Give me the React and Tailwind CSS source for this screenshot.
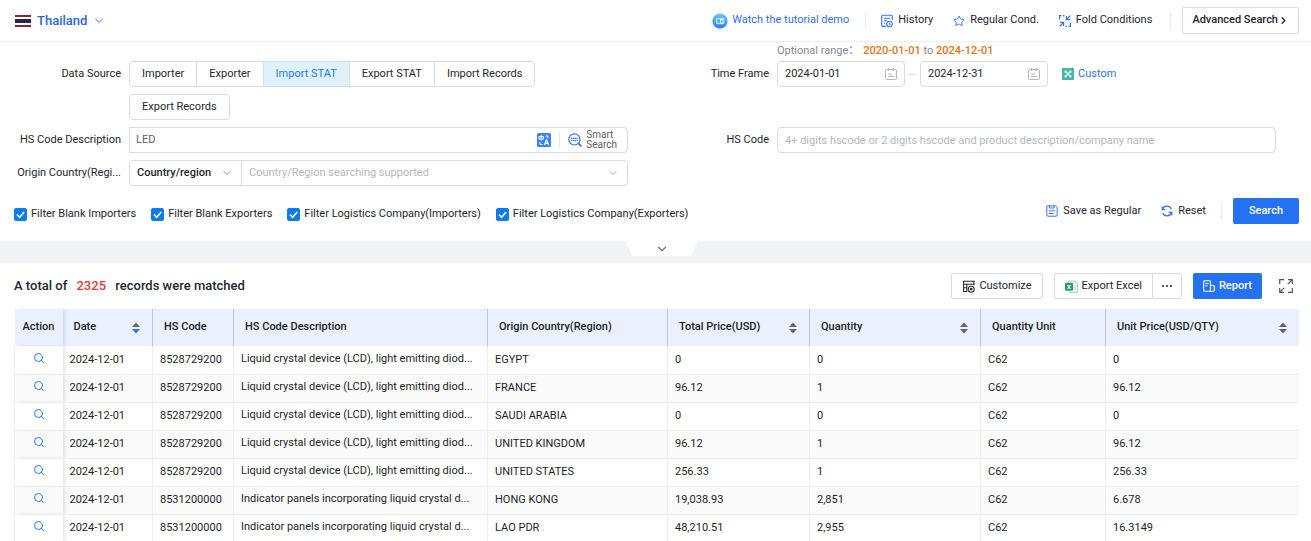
import React, { useState } from 'react';
import { ChevronDown, ChevronRight, Search, Star } from 'lucide-react';

const SOURCES = ['Importer', 'Exporter', 'Import STAT', 'Export STAT', 'Import Records', 'Export Records'];

const FILTERS = [
    'Filter Blank Importers',
    'Filter Blank Exporters',
    'Filter Logistics Company(Importers)',
    'Filter Logistics Company(Exporters)',
];

const COLUMNS = [
    { name: 'Action', width: 'w-12' },
    { name: 'Date', width: 'w-[90px]', sort: 'desc' },
    { name: 'HS Code', width: 'w-[81px]' },
    { name: 'HS Code Description', width: 'w-[254px]' },
    { name: 'Origin Country(Region)', width: 'w-[180px]' },
    { name: 'Total Price(USD)', width: 'w-[142px]', sort: 'none' },
    { name: 'Quantity', width: 'w-[171px]', sort: 'none' },
    { name: 'Quantity Unit', width: 'w-[125px]' },
    { name: 'Unit Price(USD/QTY)', width: 'w-auto', sort: 'none' },
];

const LCD = 'Liquid crystal device (LCD), light emitting diod...';
const PANEL = 'Indicator panels incorporating liquid crystal d...';

const ROWS = [
    ['2024-12-01', '8528729200', LCD, 'EGYPT', '0', '0', 'C62', '0'],
    ['2024-12-01', '8528729200', LCD, 'FRANCE', '96.12', '1', 'C62', '96.12'],
    ['2024-12-01', '8528729200', LCD, 'SAUDI ARABIA', '0', '0', 'C62', '0'],
    ['2024-12-01', '8528729200', LCD, 'UNITED KINGDOM', '96.12', '1', 'C62', '96.12'],
    ['2024-12-01', '8528729200', LCD, 'UNITED STATES', '256.33', '1', 'C62', '256.33'],
    ['2024-12-01', '8531200000', PANEL, 'HONG KONG', '19,038.93', '2,851', 'C62', '6.678'],
    ['2024-12-01', '8531200000', PANEL, 'LAO PDR', '48,210.51', '2,955', 'C62', '16.3149'],
];

const Flag = () => (
    <svg className="w-4 h-3" viewBox="0 0 16 12">
        <rect width="16" height="12" fill="#fff" />
        <rect width="16" height="2" fill="#8f2138" />
        <rect y="4" width="16" height="4" fill="#222a48" />
        <rect y="10" width="16" height="2" fill="#8f2138" />
    </svg>
);

const TutorialIcon = () => (
    <svg className="w-4 h-4" viewBox="0 0 16 16">
        <defs>
            <linearGradient id="tutorial" x1="0" y1="0" x2="0" y2="1">
                <stop offset="0" stopColor="#6cc8fa" />
                <stop offset="1" stopColor="#2b78f0" />
            </linearGradient>
        </defs>
        <circle cx="8" cy="8" r="7.6" fill="url(#tutorial)" />
        <rect x="4" y="5" width="8.4" height="6.2" rx="1.4" fill="#d9efff" />
        <rect x="5" y="6" width="3" height="4.2" rx="0.6" fill="#5fb0f7" />
        <path d="M9.5 7.6v2.200M11 6.400v3.400" stroke="#5fb0f7" />
    </svg>
);

const HistoryIcon = () => (
    <svg className="w-3 h-3.5" viewBox="0 0 12 14" fill="none" stroke="#2f74ee" strokeWidth="1.1">
        <path d="M5 12.4H1.9A1.2 1.2 0 0 1 .7 11.2V2.5A1.2 1.2 0 0 1 1.9 1.3h8.2a1.2 1.2 0 0 1 1.2 1.2V6" />
        <path d="M3 4.2h6M3 6.8h3M3 9.3h1" />
        <circle cx="8.5" cy="10" r="2.8" />
        <path d="M8.4 8.6v1.6h1.3" />
    </svg>
);

const FoldIcon = () => (
    <svg className="w-3 h-3" viewBox="0 0 12 12" fill="none" stroke="#2f74ee" strokeWidth="1.2">
        <path d="M.6 4.500V.6H2.400M4 .6h1.400M11.400 7.500v3.900H9.600M8 11.400H6.600" />
        <path d="M11.400.6 8 4M7.400 1v3.600H11" />
        <path d="M.6 11.400 4 8M4.600 11V7.400H1" />
    </svg>
);

const CalendarIcon = () => (
    <svg className="w-3 h-3 shrink-0" viewBox="0 0 12 12" fill="none" stroke="#b3b6bb">
        <rect x=".5" y="1.5" width="11" height="10" rx="1" />
        <path d="M3.5 0v3M8.5 0v3M3 6h4M3 8.500h6" />
    </svg>
);

const CustomIcon = () => (
    <svg className="w-3 h-3" viewBox="0 0 12 12">
        <rect width="12" height="12" fill="#45b8a4" />
        <path d="M3 3l6 6M9 3L3 9" stroke="#fff" strokeWidth="1.2" fill="none" />
        <path d="M2.500 2.500h2.500v2.500h-2.500zM7 2.500h2.500v2.500h-2.500zM2.500 7h2.500v2.500h-2.500zM7 7h2.500v2.500h-2.500z" fill="#cdeee8" opacity=".8" />
    </svg>
);

const TranslateIcon = () => (
    <svg className="w-3.5 h-3.5" viewBox="0 0 14 14" fill="none" stroke="#fff">
        <rect width="14" height="14" rx="1.5" fill="#3d82f0" stroke="none" />
        <path d="M2 3.500h4.500v2.500H2zM4.250 2v5.500M8.500 3h2.500v2M3 9v2.500h2.500" />
        <path d="M7.500 12l2-5.200 2.200 5.200M8.200 10.400h2.800" strokeWidth="1.2" />
    </svg>
);

const SmartIcon = () => (
    <svg className="w-3.5 h-3.5" viewBox="0 0 14 14" fill="none" stroke="#2f74ee" strokeWidth="1.2">
        <circle cx="6.4" cy="6.4" r="5.6" />
        <path d="M10.400 10.400l3 3" strokeWidth="1.5" />
        <path d="M2.800 5.300h7.200M2.800 7.500h7.200" strokeDasharray="1.6 .5" />
    </svg>
);

const SaveIcon = () => (
    <svg className="w-3 h-3" viewBox="0 0 12 12" fill="none" stroke="#2f74ee">
        <path d="M2 .8h7.500l1.700 1.700V10a1.200 1.200 0 0 1-1.200 1.200H2A1.200 1.200 0 0 1 .8 10V2A1.200 1.200 0 0 1 2 .8z" />
        <path d="M3.500.8v2.200h4.500V.8M3 5.800h6M3 8.500h4.500" />
    </svg>
);

const ResetIcon = () => (
    <svg className="w-3 h-3" viewBox="0 0 12 12" fill="none" stroke="#2f74ee" strokeWidth="1.2">
        <path d="M1.500 4.500A4.700 4.700 0 0 1 10.300 4M10.500 7.500A4.700 4.700 0 0 1 1.700 8" />
        <path d="M1.200 1.500v3.200h3M10.800 10.500V7.300h-3" />
    </svg>
);

const CustomizeIcon = () => (
    <svg className="w-[13px] h-[13px]" viewBox="0 0 13 13" fill="none" stroke="#2a2d33" strokeWidth="1.1">
        <path d="M5 11.500H1.600V1.200h10.300v4M.8 1.200h12M1.600 4.200h10.300M1.600 7.800h3.200M4.800 4.200v7.300" />
        <circle cx="9.2" cy="9.2" r="3" />
        <circle cx="9.2" cy="9.2" r=".8" />
    </svg>
);

const ExcelIcon = () => (
    <svg className="w-[13px] h-[13px]" viewBox="0 0 13 13" fill="none">
        <path d="M3.500 2.500V1h6.500l2.500 2.500v8.800h-9" stroke="#b9c4be" />
        <path d="M10 5v5" stroke="#b9c4be" />
        <rect y="2.8" width="8" height="8" rx=".8" fill="#1fa05c" />
        <path d="M2.500 4.800l3 4M5.500 4.800l-3 4" stroke="#fff" strokeWidth="1.1" />
    </svg>
);

const ReportIcon = () => (
    <svg className="w-3 h-3" viewBox="0 0 12 12" fill="none" stroke="#fff" strokeWidth="1.1">
        <path d="M10.200 11.300H1.700a1 1 0 0 1-1-1V1.700a1 1 0 0 1 1-1h4.800a1 1 0 0 1 1 1v9.600" />
        <path d="M7.500 5.500h2.800a1 1 0 0 1 1 1v3.800a1 1 0 0 1-1.100 1M2.500 3.500h3.200M2.500 5.600h2" />
    </svg>
);

const ExpandIcon = () => (
    <svg className="w-3.5 h-3.5" viewBox="0 0 14 14" fill="none" stroke="#53565c" strokeWidth="1.2">
        <path d="M.7 5V.7H5M13.300 9v4.300H9" />
        <path d="M9 .7h4.300V5M13.300.7 8.800 5.200M5 13.300H.7V9M.7 13.300l4.500-4.500" />
    </svg>
);

const SortIcon = ({ sort }) => (
    <svg className="w-2 h-3 shrink-0" viewBox="0 0 8 12">
        <path d="M4 0.5l4 4.500H0z" fill="#61656f" />
        <path d="M4 11.5L0 7h8z" fill={sort === 'desc' ? '#1b7cf2' : '#61656f'} />
    </svg>
);

const Field = ({ label, htmlFor, top, children }) => (
    <div className={`flex gap-2 pr-8.5 ${top ? 'items-start' : 'items-center'}`}>
        <label
            htmlFor={htmlFor}
            className={`w-[107px] shrink-0 whitespace-nowrap text-right leading-[26px] ${top ? 'pt-[17px]' : ''}`}
        >
            {label}
        </label>
        <div className="flex-1 min-w-0">{children}</div>
    </div>
);

const DateBox = ({ id, value, onChange, label }) => (
    <div className="flex items-center w-32 h-[26px] px-[7px] rounded border border-[#d9dbe0]">
        <input
            id={id}
            aria-label={label}
            className="flex-1 min-w-0 outline-none"
            value={value}
            onChange={e => onChange(e.target.value)}
        />
        <CalendarIcon />
    </div>
);

const Divider = () => <span className="w-px h-4 bg-[#e8e9ec]" />;

const App = () => {
    const [source, setSource] = useState('Import STAT');
    const [from, setFrom] = useState('2024-01-01');
    const [to, setTo] = useState('2024-12-31');
    const [description, setDescription] = useState('LED');

    return (
        <div className="bg-white text-[11px] text-[#24272e] font-['Roboto','Noto_Sans_CJK_SC',sans-serif]">
            {/* Header */}
            <header className="flex items-center h-[42px] pl-[15px] pr-3 border-b border-[#eceef1]">
                <button className="flex items-center gap-1.5 text-[13px] font-medium text-[#2765dd]">
                    <Flag />
                    Thailand
                    <ChevronDown size={12} />
                </button>
                <nav className="flex items-center ml-auto">
                    <a href="#tutorial" className="flex items-center gap-1 mr-4 text-[#2f6fe8]">
                        <TutorialIcon />
                        Watch the tutorial demo
                    </a>
                    <Divider />
                    <button className="flex items-center gap-[5px] ml-[15px] mr-5">
                        <HistoryIcon />
                        History
                    </button>
                    <button className="flex items-center gap-[5px] mr-5">
                        <Star size={12} color="#2f74ee" />
                        Regular Cond.
                    </button>
                    <button className="flex items-center gap-[5px] mr-[18px]">
                        <FoldIcon />
                        Fold Conditions
                    </button>
                    <Divider />
                    <button className="flex items-center ml-[11px] h-[27px] px-[9px] rounded-xs border border-[#d9dbe0] font-medium">
                        Advanced Search
                        <ChevronRight size={11} strokeWidth={3} />
                    </button>
                </nav>
            </header>

            {/* Search form */}
            <form className="pl-3.5 pt-0.5 pb-[17px]" onSubmit={e => e.preventDefault()}>
                <div className="grid grid-cols-2 gap-y-[7px] pr-px">
                    <Field label="Data Source" top>
                        <div className="flex flex-wrap gap-y-[7px] pt-[17px]">
                            {SOURCES.map((item, index) => (
                                <button
                                    key={item}
                                    type="button"
                                    onClick={() => setSource(item)}
                                    className={`h-[26px] px-3 -mr-px border first:rounded-l last:rounded ${
                                        index === 4 ? 'rounded-r' : ''
                                    } ${
                                        item === source
                                            ? 'bg-[#dff2fb] border-[#c5e4f3] text-[#1b7cf2]'
                                            : 'border-[#d9dbe0]'
                                    }`}
                                >
                                    {item}
                                </button>
                            ))}
                        </div>
                    </Field>
                    <Field label="Time Frame" htmlFor="from" top>
                        <p className="h-3.5 mb-[3px] leading-3.5 text-[#85888e]">
                            Optional range：
                            <span className="ml-1 font-medium text-[#e07414]">2020-01-01</span> to{' '}
                            <span className="font-medium text-[#e07414]">2024-12-01</span>
                        </p>
                        <div className="flex items-center">
                            <DateBox id="from" value={from} onChange={setFrom} />
                            <span className="w-[7px] h-px mx-1 bg-[#d9dbe0]" />
                            <DateBox id="to" label="End date" value={to} onChange={setTo} />
                            <button type="button" className="flex items-center gap-1 ml-3.5 text-[#2f74ee]">
                                <CustomIcon />
                                Custom
                            </button>
                        </div>
                    </Field>
                    <Field label="HS Code Description" htmlFor="description">
                        <div className="flex items-center h-[26px] px-1.5 rounded-r border border-[#d9dbe0]">
                            <input
                                id="description"
                                className="flex-1 min-w-0 outline-none text-[#5c6068]"
                                value={description}
                                onChange={e => setDescription(e.target.value)}
                            />
                            <button type="button" aria-label="Translate" className="mr-2">
                                <TranslateIcon />
                            </button>
                            <Divider />
                            <button
                                type="button"
                                className="flex items-center gap-1 ml-2 mr-1 text-left text-[10px] leading-[10px] text-[#5c6068]"
                            >
                                <SmartIcon />
                                <span>
                                    Smart
                                    <br />
                                    Search
                                </span>
                            </button>
                        </div>
                    </Field>
                    <Field label="HS Code" htmlFor="hscode">
                        <input
                            id="hscode"
                            className="block w-full h-[26px] px-[7px] rounded border border-[#d9dbe0] outline-none placeholder:text-[#b4b7bc]"
                            placeholder="4+ digits hscode or 2 digits hscode and product description/company name"
                        />
                    </Field>
                    <Field label="Origin Country(Regi..." htmlFor="origin">
                        <div className="flex h-[26px] rounded border border-[#d9dbe0]">
                            <div className="relative w-[112px] border-r border-[#d9dbe0]">
                                <select
                                    aria-label="Origin type"
                                    className="w-full h-full pl-[7px] appearance-none outline-none font-medium"
                                >
                                    <option>Country/region</option>
                                </select>
                                <ChevronDown
                                    size={12}
                                    className="absolute right-2 top-1/2 -translate-y-1/2 text-[#85888e] pointer-events-none"
                                />
                            </div>
                            <input
                                id="origin"
                                className="flex-1 min-w-0 px-[7px] outline-none placeholder:text-[#b4b7bc]"
                                placeholder="Country/Region searching supported"
                            />
                            <ChevronDown size={12} className="self-center mr-2 text-[#a4a7ad]" />
                        </div>
                    </Field>
                </div>

                <div className="flex items-end justify-between mt-3 pr-3">
                    <div className="flex gap-[15px]">
                        {FILTERS.map(item => (
                            <label key={item} className="flex items-center gap-1 h-5">
                                <span className="relative w-[13px] h-[13px]">
                                    <input
                                        type="checkbox"
                                        defaultChecked
                                        className="peer block w-[13px] h-[13px] appearance-none rounded-xs border border-[#b4b7bc] checked:border-[#0b7bf0] checked:bg-[#0b7bf0]"
                                    />
                                    <svg
                                        className="absolute inset-0 hidden peer-checked:block pointer-events-none"
                                        viewBox="0 0 13 13"
                                        fill="none"
                                        stroke="#fff"
                                        strokeWidth="1.6"
                                    >
                                        <path d="M3 6.500l2.600 2.700L10.200 4" />
                                    </svg>
                                </span>
                                {item}
                            </label>
                        ))}
                    </div>
                    <div className="flex items-center">
                        <button type="button" className="flex items-center gap-[5px] mr-5">
                            <SaveIcon />
                            Save as Regular
                        </button>
                        <button type="button" className="flex items-center gap-[5px] mr-[15px]">
                            <ResetIcon />
                            Reset
                        </button>
                        <Divider />
                        <button
                            type="submit"
                            className="ml-[11px] h-[26px] px-4 rounded-xs bg-[#2472f2] font-medium text-white"
                        >
                            Search
                        </button>
                    </div>
                </div>
            </form>

            <div className="flex justify-center h-[22px] pl-3 bg-[#f1f3f8]">
                <button
                    aria-label="Fold"
                    className="flex items-center justify-center w-[72px] h-[15px] bg-white text-[#6b6f77] [clip-path:polygon(0_0,100%_0,91%_100%,9%_100%)]"
                >
                    <ChevronDown size={14} />
                </button>
            </div>

            {/* Results */}
            <section className="pl-3.5 pr-3 pt-2.5">
                <div className="flex items-center h-[26px] mb-2.5">
                    <h2 className="mr-auto text-[13px] font-medium">
                        A total of <span className="mx-1.5 text-[#e23c33]">2325</span> records were matched
                    </h2>
                    <button className="flex items-center gap-1 h-[26px] px-2.5 mr-[11px] rounded-xs border border-[#d9dbe0]">
                        <CustomizeIcon />
                        Customize
                    </button>
                    <button className="flex items-center gap-1 h-[26px] px-2.5 rounded-l-xs border border-[#d9dbe0]">
                        <ExcelIcon />
                        Export Excel
                    </button>
                    <button
                        aria-label="More"
                        className="flex items-center justify-center gap-0.5 w-[30px] h-[26px] -ml-px mr-[11px] rounded-r-xs border border-[#d9dbe0]"
                    >
                        <span className="w-0.5 h-0.5 rounded-full bg-[#24272e]" />
                        <span className="w-0.5 h-0.5 rounded-full bg-[#24272e]" />
                        <span className="w-0.5 h-0.5 rounded-full bg-[#24272e]" />
                    </button>
                    <button className="flex items-center gap-1 h-[26px] px-2.5 rounded-xs bg-[#2472f2] font-medium text-white">
                        <ReportIcon />
                        Report
                    </button>
                    <button aria-label="Full screen" className="ml-[17px] mr-1.5">
                        <ExpandIcon />
                    </button>
                </div>

                <table className="w-full table-fixed border-collapse text-left text-[#1c1f26]">
                    <thead>
                        <tr className="h-[37px] bg-[#eaf0fe]">
                            {COLUMNS.map((column, index) => (
                                <th
                                    key={column.name}
                                    className={`${column.width} font-medium ${
                                        index === 0
                                            ? 'pl-2 shadow-[3px_0_4px_-1px_rgba(60,70,110,0.14)]'
                                            : 'pl-[11px] pr-3'
                                    } ${index > 1 ? 'border-l border-[#bfc5d4]' : ''}`}
                                >
                                    <span className="flex items-center justify-between whitespace-nowrap">
                                        {column.name}
                                        {column.sort && <SortIcon sort={column.sort} />}
                                    </span>
                                </th>
                            ))}
                        </tr>
                    </thead>
                    <tbody>
                        {ROWS.map((row, index) => (
                            <tr key={index} className="h-7 border-b border-[#eceef1] even:bg-[#fafafa]">
                                <td className="border-l border-[#eceef1] shadow-[3px_0_4px_-1px_rgba(60,70,110,0.14)]">
                                    <button aria-label="View" className="block mx-auto mb-1 text-[#1b7cf2]">
                                        <Search size={12} />
                                    </button>
                                </td>
                                {row.map((cell, i) => (
                                    <td
                                        key={i}
                                        className={`whitespace-nowrap px-[7px] ${i > 0 ? 'border-l border-[#eceef1]' : ''} ${
                                            i === 2 ? 'pb-0.5' : ''
                                        }`}
                                    >
                                        {cell}
                                    </td>
                                ))}
                            </tr>
                        ))}
                    </tbody>
                </table>
            </section>
        </div>
    );
};

export default App;
